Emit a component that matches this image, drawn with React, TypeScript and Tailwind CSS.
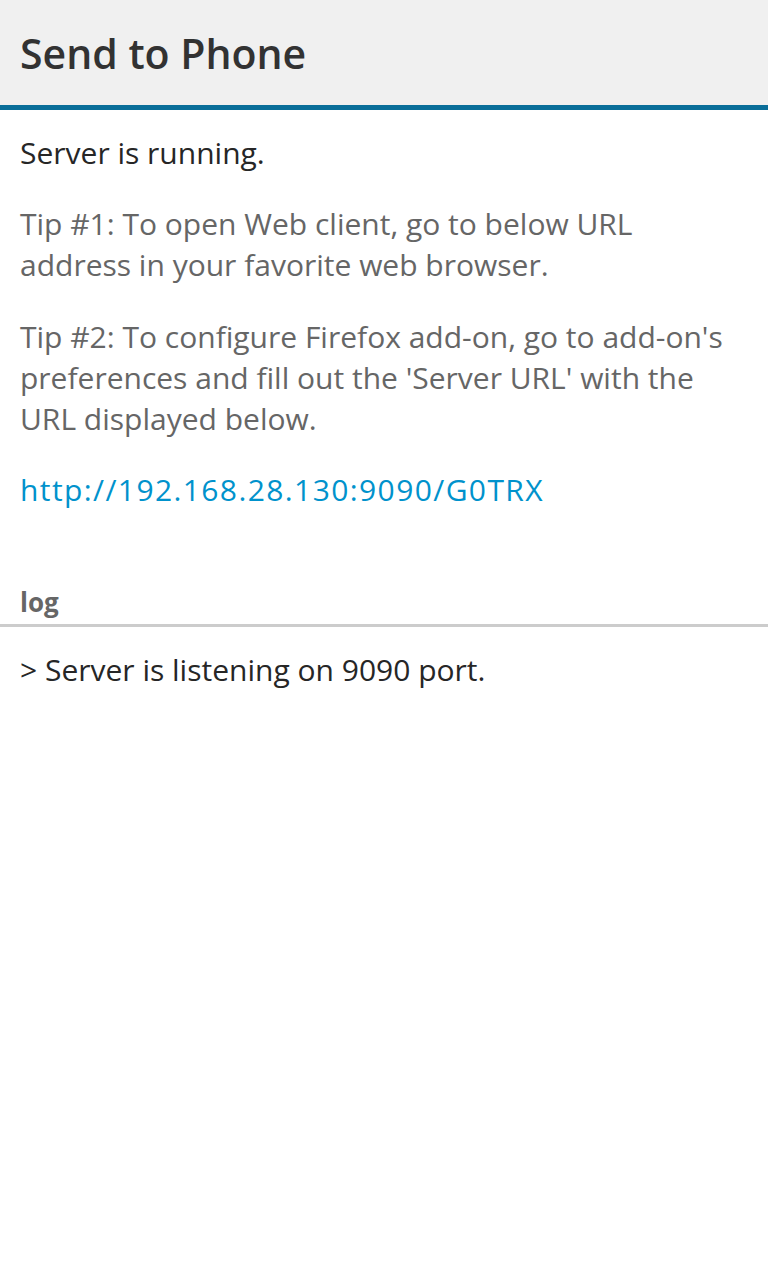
export default function App() {
  return (
    <div className="w-[768px] h-[1280px] bg-white" style={{ fontFamily: '"Open Sans", sans-serif' }}>
      <div className="h-[110px] bg-[#f0f0f0] border-b-[5px] border-[#0a6e99] flex items-center px-[20px]">
        <h1 className="text-[41px] font-semibold text-[#323232] leading-none pt-[2px]">Send to Phone</h1>
      </div>
      <div className="px-[20px] pt-[22px]">
        <p className="text-[30px] leading-[41px] text-[#262626]">Server is running.</p>
        <p className="mt-[30px] text-[30px] leading-[41px] text-[#666666]">
          Tip #1: To open Web client, go to below URL address in your favorite web browser.
        </p>
        <p className="mt-[31px] text-[30px] leading-[41px] text-[#666666]">
          Tip #2: To configure Firefox add-on, go to add-on's preferences and fill out the 'Server URL' with the URL displayed below.
        </p>
        <p className="mt-[30px] text-[30px] leading-[41px] text-[#0092cc] tracking-[1.4px]">http://192.168.28.130:9090/G0TRX</p>
      </div>
      <div className="mt-[77px] px-[20px] text-[26px] font-bold text-[#666666] leading-[30px]">log</div>
      <div className="mt-[7px] h-[3px] bg-[#cccccc]" />
      <div className="px-[20px] pt-[22px] text-[30px] leading-[41px] text-[#262626]">&gt; Server is listening on 9090 port.</div>
    </div>
  );
}
